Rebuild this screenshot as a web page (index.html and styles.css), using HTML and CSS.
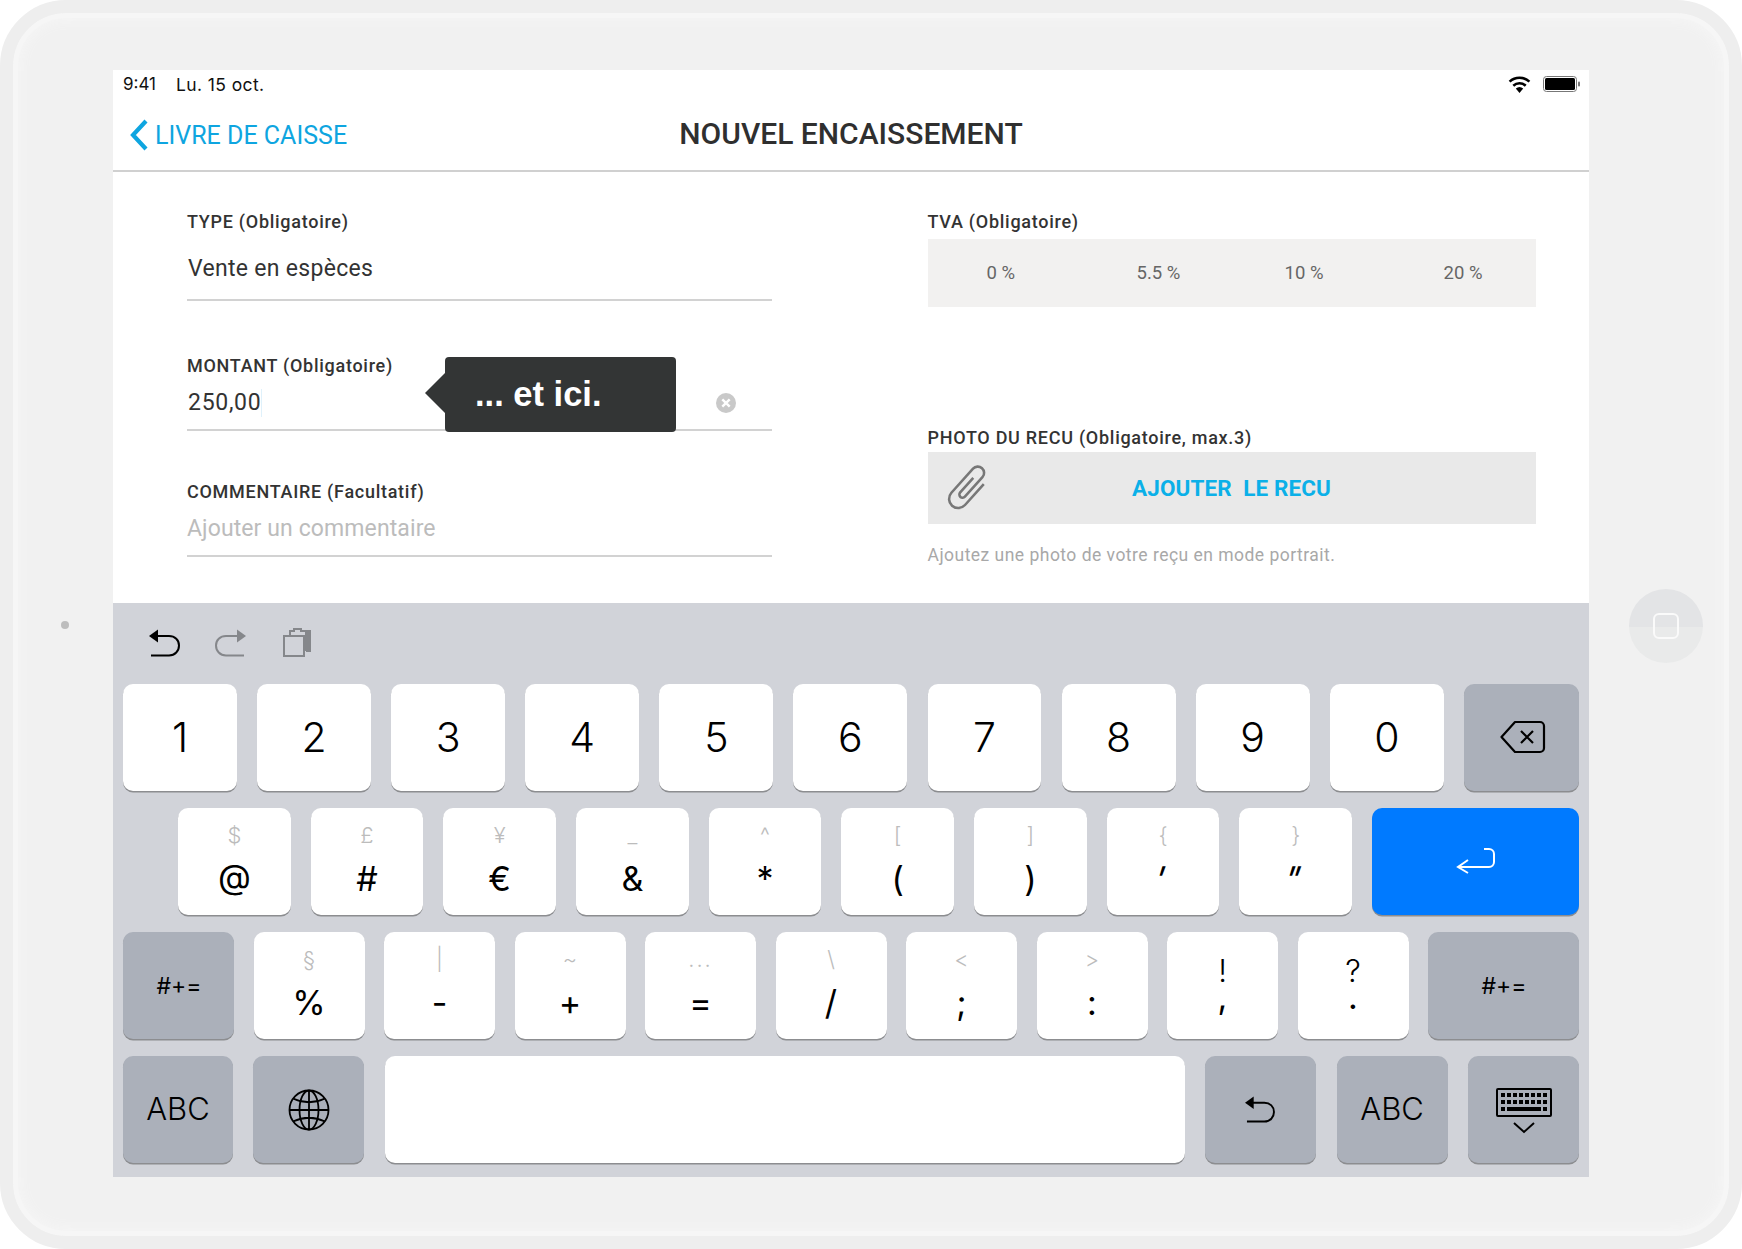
FILE: index.html

```html
<!DOCTYPE html>
<html lang="fr">
<head>
    <meta charset="UTF-8">
    <title>Nouvel encaissement</title>
    <link rel="stylesheet" href="styles.css">
</head>
<body>
    <svg class="sprites" width="0" height="0">
        <symbol id="undo" viewBox="0 0 32 28">
            <path d="M1 7 L10 0.5 V13.5 Z" fill="currentColor"/>
            <path d="M9 7 H21 C27 7 31 11 31 16.5 C31 22 27 26.5 21 26.5 H3" fill="none" stroke="currentColor" stroke-width="2"/>
        </symbol>
    </svg>

    <div class="device">
        <div class="camera-col"><span class="camera"></span></div>

        <div class="screen">
            <!-- Status bar -->
            <div class="statusbar">
                <span class="clock">9:41</span>
                <span class="date">Lu. 15 oct.</span>
                <span class="status-icons">
                    <svg class="wifi" width="23" height="17" viewBox="0 0 23 17">
                        <path d="M11.5 17 L7.8 12.6 A5.6 5.6 0 0 1 15.2 12.6 Z" fill="#000"/>
                        <path d="M5.3 9.7 A9.2 9.2 0 0 1 17.7 9.7" fill="none" stroke="#000" stroke-width="2.6"/>
                        <path d="M1.6 5.6 A14.6 14.6 0 0 1 21.4 5.6" fill="none" stroke="#000" stroke-width="2.6"/>
                    </svg>
                    <svg class="battery" width="37" height="16" viewBox="0 0 37 16">
                        <rect x="0.5" y="0.5" width="33" height="15" rx="3" fill="none" stroke="#777"/>
                        <rect x="2" y="2" width="30" height="12" rx="1.5" fill="#000"/>
                        <rect x="35" y="5.5" width="2" height="5" rx="1" fill="#777"/>
                    </svg>
                </span>
            </div>

            <!-- Nav -->
            <div class="navbar">
                <a class="back">
                    <svg width="20" height="32" viewBox="0 0 20 32">
                        <path d="M17 2 L4 16 L17 30" fill="none" stroke="#0ea5e0" stroke-width="4.2"/>
                    </svg>
                    <span>LIVRE DE CAISSE</span>
                </a>
                <div class="nav-title">NOUVEL ENCAISSEMENT</div>
            </div>

            <!-- Form -->
            <div class="form">
                <div class="col-left">
                    <div class="field-label">TYPE (Obligatoire)</div>
                    <div class="field-value field-value-type">Vente en espèces</div>

                    <div class="field-label label-montant">MONTANT (Obligatoire)</div>
                    <div class="field-value field-value-montant">
                        <span>250,00</span><span class="caret"></span>
                        <span class="clear">
                            <svg width="20" height="20" viewBox="0 0 20 20">
                                <circle cx="10" cy="10" r="10" fill="#c9c9c9"/>
                                <path d="M6.3 6.3 L13.7 13.7 M13.7 6.3 L6.3 13.7" stroke="#fff" stroke-width="2.4"/>
                            </svg>
                        </span>
                        <div class="tooltip">... et ici.</div>
                    </div>

                    <div class="field-label label-comment">COMMENTAIRE (Facultatif)</div>
                    <div class="field-value field-value-comment">Ajouter un commentaire</div>
                </div>

                <div class="col-right">
                    <div class="field-label">TVA (Obligatoire)</div>
                    <div class="tva">
                        <span>0 %</span>
                        <span>5.5 %</span>
                        <span>10 %</span>
                        <span>20 %</span>
                    </div>

                    <div class="field-label label-photo">PHOTO DU RECU (Obligatoire, max.3)</div>
                    <div class="upload">
                        <svg class="clip" width="44" height="46" viewBox="0 0 44 46">
                            <path transform="translate(22 23) rotate(42) scale(1.22) translate(-21.5 -21)" d="M29 10 V33 A7.5 7.5 0 0 1 14 33 V6.5 A5.2 5.2 0 0 1 24.4 6.5 V28 A2.6 2.6 0 0 1 19.2 28 V12" fill="none" stroke="#777" stroke-width="2.1"/>
                        </svg>
                        <span>AJOUTER&nbsp; LE RECU</span>
                    </div>
                    <div class="hint">Ajoutez une photo de votre reçu en mode portrait.</div>
                </div>
            </div>

            <!-- Keyboard -->
            <div class="keyboard">
                <div class="kb-tools">
                    <svg class="tool tool-undo" width="32" height="28"><use href="#undo"/></svg>
                    <svg class="tool tool-redo" width="32" height="28"><use href="#undo" transform="matrix(-1 0 0 1 32 0)"/></svg>
                    <svg class="tool tool-paste" width="28" height="29" viewBox="0 0 28 29">
                        <path d="M7 7 V3 H11 V1 H18 V3 H27 V23 H23" fill="none" stroke="#85878b" stroke-width="2"/>
                        <rect x="22" y="4" width="5" height="19" fill="#85878b"/>
                        <rect x="1" y="8" width="20" height="20" fill="none" stroke="#85878b" stroke-width="2"/>
                    </svg>
                </div>

                <div class="kb-row row-1">
                    <div class="key">1</div>
                    <div class="key">2</div>
                    <div class="key">3</div>
                    <div class="key">4</div>
                    <div class="key">5</div>
                    <div class="key">6</div>
                    <div class="key">7</div>
                    <div class="key">8</div>
                    <div class="key">9</div>
                    <div class="key">0</div>
                    <div class="key key-dark key-delete">
                        <svg width="46" height="34" viewBox="0 0 46 34">
                            <path d="M1.5 17 L15 2 H40 A4 4 0 0 1 44 6 V28 A4 4 0 0 1 40 32 H15 Z" fill="none" stroke="#000" stroke-width="2.2" stroke-linejoin="round"/>
                            <path d="M21 11 L33 23 M33 11 L21 23" stroke="#000" stroke-width="2.2"/>
                        </svg>
                    </div>
                </div>

                <div class="kb-row row-2">
                    <div class="key key-sym"><small>$</small><span class="at">@</span></div>
                    <div class="key key-sym"><small>£</small><span>#</span></div>
                    <div class="key key-sym"><small>¥</small><span>€</span></div>
                    <div class="key key-sym"><small>_</small><span>&amp;</span></div>
                    <div class="key key-sym"><small>^</small><span>*</span></div>
                    <div class="key key-sym"><small>[</small><span>(</span></div>
                    <div class="key key-sym"><small>]</small><span>)</span></div>
                    <div class="key key-sym"><small>{</small><span class="slanted">'</span></div>
                    <div class="key key-sym"><small>}</small><span class="slanted">"</span></div>
                    <div class="key key-return">
                        <svg width="40" height="26" viewBox="0 0 40 26">
                            <path d="M12 12 L2 19 L12 25 M2 19 H33 A5 5 0 0 0 38 14 V6 A5 5 0 0 0 33 1 H28" fill="none" stroke="#fff" stroke-width="2"/>
                        </svg>
                    </div>
                </div>

                <div class="kb-row row-3">
                    <div class="key key-dark key-shift">#+=</div>
                    <div class="key key-sym"><small>§</small><span>%</span></div>
                    <div class="key key-sym"><small>|</small><span>-</span></div>
                    <div class="key key-sym"><small>~</small><span>+</span></div>
                    <div class="key key-sym"><small class="dots">...</small><span>=</span></div>
                    <div class="key key-sym"><small>\</small><span>/</span></div>
                    <div class="key key-sym"><small>&lt;</small><span>;</span></div>
                    <div class="key key-sym"><small>&gt;</small><span>:</span></div>
                    <div class="key key-sym"><small class="black">!</small><span class="lift">,</span></div>
                    <div class="key key-sym"><small class="black">?</small><span class="lift">.</span></div>
                    <div class="key key-dark key-shift key-shift-right">#+=</div>
                </div>

                <div class="kb-row row-4">
                    <div class="key key-dark key-abc">ABC</div>
                    <div class="key key-dark key-globe">
                        <svg width="42" height="42" viewBox="0 0 42 42" fill="none" stroke="#000" stroke-width="1.8">
                            <circle cx="21" cy="21" r="19.5"/>
                            <ellipse cx="21" cy="21" rx="9.5" ry="19.5"/>
                            <path d="M21 1.5 V40.5 M1.5 21 H40.5 M5 9.5 Q21 17 37 9.5 M5 32.5 Q21 25 37 32.5"/>
                        </svg>
                    </div>
                    <div class="key key-space"></div>
                    <div class="key key-dark key-undo">
                        <svg class="undo-icon" width="31" height="27"><use href="#undo"/></svg>
                    </div>
                    <div class="key key-dark key-abc2">ABC</div>
                    <div class="key key-dark key-hide">
                        <svg width="56" height="46" viewBox="0 0 56 46">
                            <rect x="1" y="1" width="54" height="27" rx="1" fill="none" stroke="#000" stroke-width="2"/>
                            <g fill="#000">
                                <rect x="5" y="5" width="4" height="4"/><rect x="11" y="5" width="4" height="4"/><rect x="17" y="5" width="4" height="4"/><rect x="23" y="5" width="4" height="4"/><rect x="29" y="5" width="4" height="4"/><rect x="35" y="5" width="4" height="4"/><rect x="41" y="5" width="4" height="4"/><rect x="47" y="5" width="4" height="4"/>
                                <rect x="5" y="12" width="4" height="4"/><rect x="11" y="12" width="4" height="4"/><rect x="17" y="12" width="4" height="4"/><rect x="23" y="12" width="4" height="4"/><rect x="29" y="12" width="4" height="4"/><rect x="35" y="12" width="4" height="4"/><rect x="41" y="12" width="4" height="4"/><rect x="47" y="12" width="4" height="4"/>
                                <rect x="5" y="19" width="4" height="4"/><rect x="11" y="19" width="34" height="4"/><rect x="47" y="19" width="4" height="4"/>
                            </g>
                            <path d="M18 35 L28 44 L38 35" fill="none" stroke="#000" stroke-width="2"/>
                        </svg>
                    </div>
                </div>
            </div>
        </div>

        <div class="home"><span class="home-square"></span></div>
    </div>
</body>
</html>
```

FILE: styles.css

```css
* {
    box-sizing: border-box;
}
body {
    margin: 0;
    background-color: #fff;
    font-family: Roboto, sans-serif;
}
.sprites {
    display: none;
}
.device {
    width: 1742px;
    height: 1249px;
    display: flex;
    align-items: center;
    padding-bottom: 2px;
    background-color: #f1f1f1;
    border: 13px solid #eeeeee;
    border-radius: 66px;
    box-shadow: inset 0 0 0 5px #f6f6f6, inset 0 0 12px 8px #f5f5f5;
}

.camera-col {
    width: 100px;
    display: flex;
    justify-content: center;
    padding: 2px 0 0 3px;
}
.camera {
    width: 8px;
    height: 8px;
    border-radius: 50%;
    background-color: #bdbdbd;
}

.home {
    width: 74px;
    height: 74px;
    margin: 4px 0 0 40px;
    border-radius: 50%;
    background: linear-gradient(#e3e4e6 52%, #e9eaea 52%);
    display: flex;
    align-items: center;
    justify-content: center;
}
.home-square {
    width: 26px;
    height: 26px;
    border: 2px solid #fafafa;
    border-radius: 6px;
}

.screen {
    width: 1476px;
    height: 1107px;
    background-color: #fff;
    display: flex;
    flex-direction: column;
}

.statusbar {
    height: 26px;
    display: flex;
    align-items: center;
    padding: 2px 9px 0 10px;
    font-family: Inter, sans-serif;
    font-size: 17px;
    color: #111;
}
.date {
    margin-left: 20px;
    font-size: 17.5px;
    letter-spacing: 0.4px;
}
.status-icons {
    margin-left: auto;
    display: flex;
    align-items: center;
    gap: 12px;
}

.navbar {
    height: 76px;
    display: grid;
    grid-template-columns: 1fr auto 1fr;
    align-items: center;
    border-bottom: 2px solid #d0d0d0;
}
.back {
    display: flex;
    align-items: center;
    gap: 6px;
    padding: 4px 0 0 16px;
    color: #0ea5e0;
    font-size: 25px;
}
.nav-title {
    font-size: 30px;
    font-weight: 500;
    color: #2f2f2f;
}

.form {
    height: 431px;
    display: flex;
    gap: 155.5px;
    padding: 39px 0 0 74px;
}
.col-left {
    width: 585px;
}
.col-right {
    width: 608px;
}
.field-label {
    font-size: 18px;
    line-height: 22px;
    font-weight: 500;
    letter-spacing: 0.72px;
    color: #333;
}
.label-montant {
    margin-top: 54px;
}
.label-comment {
    margin-top: 50px;
}
.label-photo {
    margin-top: 120px;
}
.field-value {
    position: relative;
    font-size: 23px;
    line-height: 30px;
    color: #333;
    border-bottom: 2px solid #d2d2d2;
}
.field-value-type {
    padding: 21px 0 15px 1px;
    letter-spacing: 0.3px;
}
.field-value-montant {
    display: flex;
    align-items: center;
    padding: 11px 0 11px 1px;
    letter-spacing: 0.7px;
}
.field-value-comment {
    padding: 11px 0 11px;
    color: #bcbcbc;
    letter-spacing: 0.1px;
}
.caret {
    width: 1px;
    height: 28px;
    background-color: #dff1fb;
}
.clear {
    position: absolute;
    left: 529px;
    top: 16px;
    line-height: 0;
}
.tooltip {
    position: absolute;
    left: 258px;
    top: -20px;
    width: 231px;
    height: 75px;
    padding-left: 30px;
    background-color: #333535;
    border-radius: 4px;
    color: #fff;
    font-family: "Liberation Sans", sans-serif;
    font-weight: bold;
    font-size: 34.5px;
    line-height: 75px;
    letter-spacing: 0;
}
.tooltip::before {
    content: "";
    position: absolute;
    left: -20px;
    top: 16px;
    border-style: solid;
    border-width: 20px 20px 20px 0;
    border-color: transparent #333535 transparent transparent;
}

.tva {
    height: 68px;
    margin-top: 6px;
    display: grid;
    grid-template-columns: 150px 148px 159px 1fr;
    align-items: center;
    padding-left: 59px;
    background-color: #f2f1f0;
    color: #666;
    font-size: 18.5px;
}
.upload {
    position: relative;
    height: 72px;
    margin-top: 3px;
    display: flex;
    align-items: center;
    justify-content: center;
    background-color: #e9e9e9;
    color: #0bb0e8;
    font-size: 22.5px;
    font-weight: 700;
    letter-spacing: 0.1px;
}
.clip {
    position: absolute;
    left: 18px;
    top: 13px;
}
.hint {
    margin-top: 20px;
    font-size: 17.5px;
    line-height: 22px;
    letter-spacing: 0.48px;
    color: #a8a8a8;
}

.keyboard {
    height: 574px;
    padding: 0 10px;
    background-color: #d1d3d9;
}
.kb-tools {
    height: 81px;
    display: flex;
    align-items: center;
    padding: 0 0 2px 25px;
}
.tool-undo {
    color: #000;
}
.tool-redo {
    margin-left: 35px;
    color: #85878b;
}
.tool-paste {
    margin-left: 36px;
}
.kb-row {
    display: flex;
    margin-bottom: 17px;
}
.row-1 {
    gap: 20.2px;
}
.row-2 {
    gap: 20px;
    margin-left: 55px;
}
.row-3 {
    gap: 19.5px;
}
.row-4 {
    gap: 20.4px;
    margin-bottom: 0;
}
.key {
    flex: 1;
    min-width: 0;
    height: 107px;
    display: flex;
    align-items: center;
    justify-content: center;
    padding-bottom: 2px;
    background-color: #fff;
    border-radius: 10px;
    box-shadow: 0 1.5px 0.5px #8c8d90;
    font-family: Inter, sans-serif;
    font-size: 41px;
    font-weight: 300;
    color: #000;
}
.key-dark {
    background-color: #abb0ba;
}
.key-delete {
    flex: 0 0 115px;
    padding-left: 4px;
}
.key-return {
    flex: 0 0 207px;
    background-color: #007aff;
}
.key-shift {
    flex: 0 0 111px;
    padding: 0 0 0 1px;
    font-size: 23px;
    font-weight: 400;
}
.key-shift-right {
    flex-basis: 151px;
}
.key-abc {
    flex: 0 0 110px;
}
.key-abc, .key-abc2 {
    font-size: 31px;
}
.key-globe, .key-hide {
    flex: 0 0 111px;
}
.key-globe svg {
    margin-top: 2px;
}
.key-undo, .key-abc2 {
    flex: 0 0 111px;
}
.key-space {
    flex: 1;
}
.key-hide svg {
    margin-top: 5px;
}
.undo-icon {
    margin: 2px 2px 0 0;
}
.key-sym {
    flex-direction: column;
    justify-content: flex-start;
    padding: 5px 0 0;
}
.key-sym small {
    height: 44px;
    line-height: 44px;
    font-size: 22px;
    color: #bcbcbc;
}
.key-sym small.black {
    height: 32px;
    margin-top: 18px;
    line-height: 32px;
    color: #000;
    font-size: 31px;
    font-weight: 300;
}
.key-sym small.dots {
    letter-spacing: 2px;
}
.key-sym span {
    height: 44px;
    line-height: 44px;
    font-size: 34px;
    font-weight: 400;
}
.key-sym span.at {
    line-height: 40px;
}
.key-sym span.lift {
    height: 20px;
    line-height: 20px;
}
.slanted {
    margin-right: 8px;
    font-style: italic;
    transform: skewX(-10deg);
}
```
